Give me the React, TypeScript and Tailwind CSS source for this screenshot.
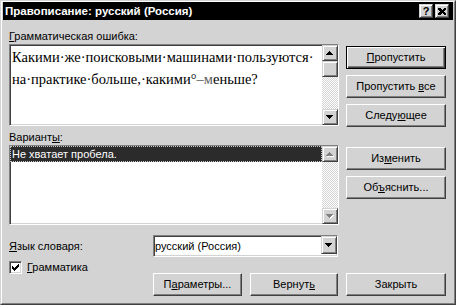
import type { ReactNode } from 'react'

const face = 'bg-[#d3d3d3]'
const raised =
  'border border-t-[#d3d3d3] border-l-[#d3d3d3] border-r-[#404040] border-b-[#404040] shadow-[inset_1px_1px_0_#fff,inset_-1px_-1px_0_#808080]'
const sunken =
  'border border-t-[#808080] border-l-[#808080] border-r-white border-b-white shadow-[inset_1px_1px_0_#404040,inset_-1px_-1px_0_#d3d3d3]'
const dither =
  'bg-[image:repeating-conic-gradient(#fff_0_25%,#d3d3d3_0_50%)] bg-[length:2px_2px]'

function Key({ children }: { children: ReactNode }) {
  return <span className="underline decoration-1 underline-offset-[1px]">{children}</span>
}

function Button({ children, def = false, className = '' }: { children: ReactNode; def?: boolean; className?: string }) {
  const edge = def
    ? 'border border-black shadow-[inset_1px_1px_0_#fff,inset_-1px_-1px_0_#404040,inset_-2px_-2px_0_#808080]'
    : 'border border-t-white border-l-white border-r-[#404040] border-b-[#404040] shadow-[inset_-1px_-1px_0_#808080]'
  return (
    <div className={`flex h-[23px] shrink-0 items-center justify-center ${face} ${edge} ${className}`}>
      <span className="-mt-[1px]">{children}</span>
    </div>
  )
}

function Arrow({ up = false, disabled = false }: { up?: boolean; disabled?: boolean }) {
  const rows = [
    [0, 7],
    [1, 5],
    [2, 3],
    [3, 1],
  ]
  const tri = (fill: string, dx: number, dy: number) =>
    rows.map(([x, w], i) => (
      <rect key={fill + i} x={x + dx} y={(up ? 3 - i : i) + dy} width={w} height={1} fill={fill} />
    ))
  return (
    <svg width="8" height="5" viewBox="0 0 8 5" shapeRendering="crispEdges">
      {disabled ? (
        <>
          {tri('#fff', 1, 1)}
          {tri('#808080', 0, 0)}
        </>
      ) : (
        tri('#000', 0, 0)
      )}
    </svg>
  )
}

function ScrollButton({ up = false, disabled = false }: { up?: boolean; disabled?: boolean }) {
  return (
    <div className={`flex h-[16px] w-[16px] shrink-0 items-center justify-center ${face} ${raised}`}>
      <Arrow up={up} disabled={disabled} />
    </div>
  )
}

function CheckMark() {
  const cols = [2, 3, 4, 3, 2, 1, 0]
  return (
    <svg width="7" height="7" viewBox="0 0 7 7" shapeRendering="crispEdges">
      {cols.map((y, x) => (
        <rect key={x} x={x} y={y} width={1} height={3} fill="#000" />
      ))}
    </svg>
  )
}

export default function App() {
  return (
    <div className="h-[305px] w-[456px] bg-white font-['Liberation_Sans',Arial,sans-serif] text-[11px] leading-[13px] text-black">
      <div className="h-full w-full border border-t-[#d3d3d3] border-l-[#d3d3d3] border-r-[#404040] border-b-[#404040]">
        <div className={`flex h-full w-full flex-col border border-t-white border-l-white border-r-[#808080] border-b-[#808080] px-[1px] ${face}`}>
          {/* title bar */}
          <div className="flex h-[18px] shrink-0 items-center justify-between bg-black pl-[2px] pr-[4px]">
            <span className="text-[11.5px] font-bold leading-[14px] text-white">Правописание: русский (Россия)</span>
            <div className="flex gap-[2px]">
              <div className={`flex h-[14px] w-[14px] items-center justify-center ${face} ${raised}`}>
                <span className="text-[11px] font-bold leading-[11px]">?</span>
              </div>
              <div className={`flex h-[14px] w-[14px] items-center justify-center ${face} ${raised}`}>
                <svg width="8" height="7" viewBox="0 0 8 7" shapeRendering="crispEdges">
                  <path d="M0 0h2l2 2 2-2h2v1l-2 2.5 2 2.5v1h-2l-2-2-2 2h-2v-1l2-2.5-2-2.5z" fill="#000" />
                </svg>
              </div>
            </div>
          </div>

          <div className="flex flex-col pl-[6px] pr-[7px]">
            <div className="mt-[10px] h-[13px]">
              <Key>Г</Key>рамматическая ошибка:
            </div>

            <div className="mt-[1px] flex h-[82px] gap-[7px]">
              <div className={`flex h-[82px] w-[330px] bg-white ${sunken}`}>
                <div className="flex-1 px-[2px] pt-[1px] font-['Liberation_Serif','Times_New_Roman',serif] text-[14.5px] leading-[22px]">
                  <div>Какими·же·поисковыми·машинами·пользуются·</div>
                  <div>
                    на·практике·больше,·какими°<span className="text-[#5c5c5c]">–м</span>еньше?
                  </div>
                </div>
                <div className="flex w-[16px] flex-col">
                  <ScrollButton up />
                  <div className={`h-[16px] w-[16px] ${face} ${raised}`} />
                  <div className={`flex-1 ${dither}`} />
                  <ScrollButton />
                </div>
              </div>
              <div className="flex w-[100px] flex-col gap-[6px] pt-[2px]">
                <Button def>
                  <Key>П</Key>ропустить
                </Button>
                <Button>
                  Пропустить <Key>в</Key>се
                </Button>
                <Button>
                  Следу<Key>ю</Key>щее
                </Button>
              </div>
            </div>

            <div className="mt-[5px] h-[13px]">
              Вариант<Key>ы</Key>:
            </div>

            <div className="mt-[1px] flex h-[80px] gap-[7px]">
              <div className={`flex h-[80px] w-[330px] bg-white ${sunken}`}>
                <div className="flex-1">
                  <div className="flex h-[16px] items-center border border-dotted border-[#c8c8c8] bg-[#2b2b2b] pl-[1px] text-white">
                    Не хватает пробела.
                  </div>
                </div>
                <div className="flex w-[16px] flex-col">
                  <ScrollButton up disabled />
                  <div className={`flex-1 ${dither}`} />
                  <ScrollButton disabled />
                </div>
              </div>
              <div className="flex w-[100px] flex-col gap-[6px] pt-[2px]">
                <Button>
                  Из<Key>м</Key>енить
                </Button>
                <Button>
                  Об<Key>ъ</Key>яснить...
                </Button>
              </div>
            </div>

            <div className="mt-[10px] flex">
              <div className="flex w-[144px] flex-col">
                <div className="mt-[5px] h-[13px]">
                  <Key>Я</Key>зык словаря:
                </div>
                <div className="mt-[8px] flex items-center gap-[5px]">
                  <div className={`flex h-[13px] w-[13px] items-center justify-center bg-white ${sunken}`}>
                    <CheckMark />
                  </div>
                  <span>
                    <Key>Г</Key>рамматика
                  </span>
                </div>
              </div>
              <div className="flex flex-col">
                <div className={`flex h-[22px] w-[185px] bg-white ${sunken}`}>
                  <div className="flex flex-1 items-center pl-[1px]">русский (Россия)</div>
                  <div className={`flex h-[18px] w-[16px] items-center justify-center ${face} ${raised}`}>
                    <Arrow />
                  </div>
                </div>
                <div className="mt-[16px] flex gap-[8px]">
                  <Button className="w-[89px]">
                    П<Key>а</Key>раметры...
                  </Button>
                  <Button className="w-[88px]">
                    Вернут<Key>ь</Key>
                  </Button>
                  <Button className="w-[100px]">Закрыть</Button>
                </div>
              </div>
            </div>
          </div>
        </div>
      </div>
    </div>
  )
}
